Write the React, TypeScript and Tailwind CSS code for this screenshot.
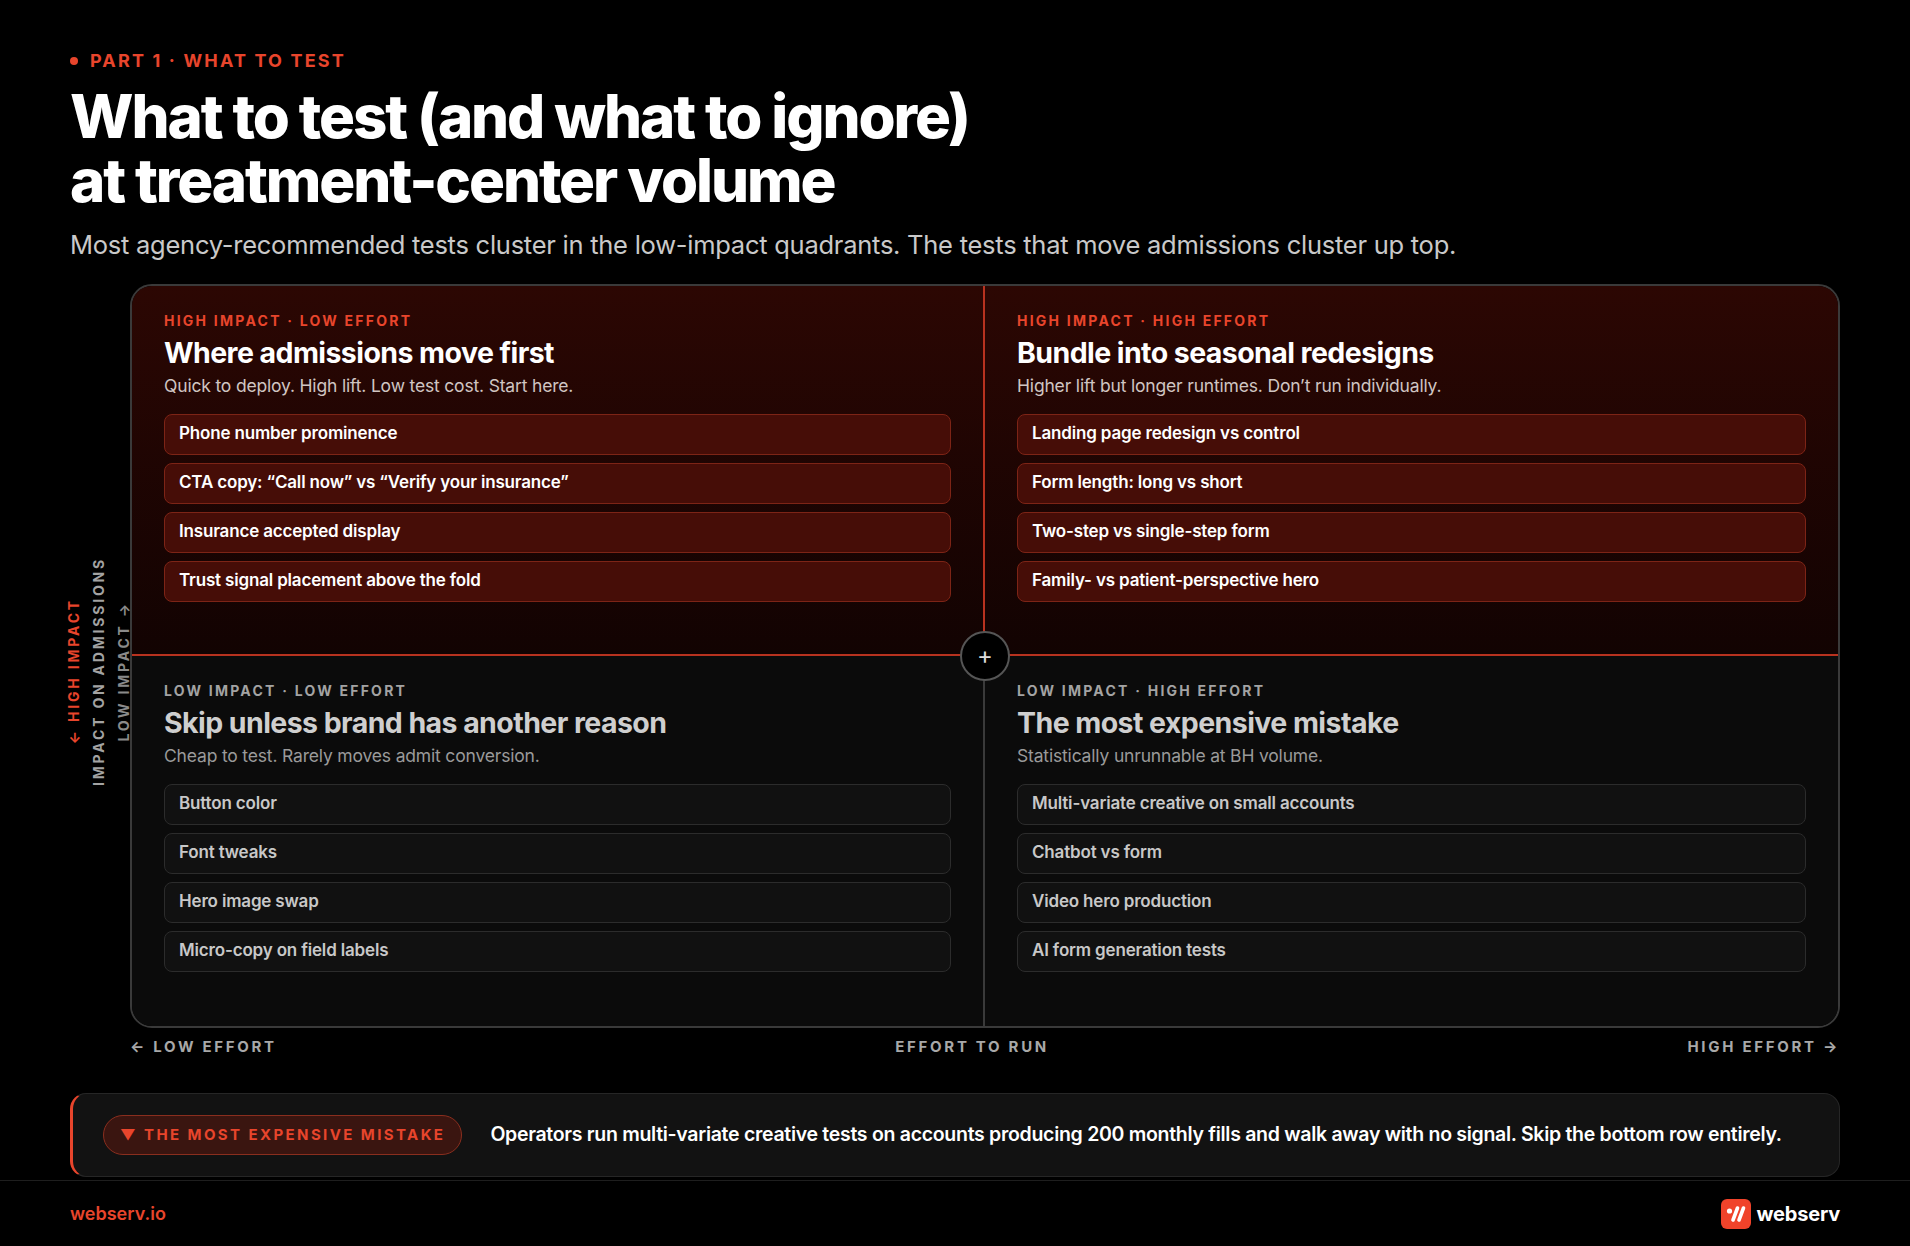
import React from "react";

const F = { fontFamily: "Inter, 'Liberation Sans', sans-serif" };

function Quad({ tag, title, desc, items, hot, cls }: { tag: string; title: string; desc: string; items: string[]; hot: boolean; cls: string }) {
  return (
    <div className={`px-8 pt-[24px] pb-8 ${cls}`}>
      <div className={`text-[14px] font-bold tracking-[0.16em] ${hot ? "text-[#e8452c]" : "text-[#a3a3a3]"}`}>{tag}</div>
      <div className={`mt-[4px] text-[28.5px] font-bold tracking-[-0.02em] leading-[36px] ${hot ? "text-white" : "text-[#cfcfcf]"}`}>{title}</div>
      <div className={`mt-[2px] text-[17.5px] tracking-[-0.01em] ${hot ? "text-[#d0c5c2]" : "text-[#9a9a9a]"}`}>{desc}</div>
      <div className="mt-[14px] flex flex-col gap-[8px]">
        {items.map((t) => (
          <div key={t} className={`h-[41px] flex items-center px-[14px] rounded-[8px] border text-[17px] font-semibold tracking-[-0.01em] ${hot ? "bg-[#460d07] border-[#7d2416] text-white" : "bg-[#111111] border-[#2c2c2c] text-[#c8c8c8]"}`}>{t}</div>
        ))}
      </div>
    </div>
  );
}

export default function App() {
  return (
    <div className="w-[1910px] h-[1246px] bg-black overflow-hidden flex flex-col" style={F}>
      <div className="px-[70px] pt-[47px] flex-1">
        <div className="flex items-center gap-3 text-[#e8452c] text-[18px] font-bold tracking-[0.12em]">
          <span className="w-[8px] h-[8px] rounded-full bg-[#e8452c]" />PART 1 · WHAT TO TEST
        </div>
        <h1 className="mt-[10px] text-white text-[60px] font-extrabold leading-[64px] tracking-[-0.035em]">What to test (and what to ignore)<br />at treatment-center volume</h1>
        <p className="mt-[14px] text-[#c9c9c9] text-[25.5px] tracking-[-0.01em]">Most agency-recommended tests cluster in the low-impact quadrants. The tests that move admissions cluster up top.</p>

        <div className="mt-[20px] flex">
          <div className="w-[60px] flex items-center justify-center gap-[4px] pr-[4px]">
            <div className="[writing-mode:vertical-rl] rotate-180 text-[#e8452c] text-[14px] font-bold tracking-[0.2em]">← HIGH IMPACT</div>
            <div className="[writing-mode:vertical-rl] rotate-180 text-[#a3a3a3] text-[14px] font-bold tracking-[0.2em]">IMPACT ON ADMISSIONS</div>
            <div className="[writing-mode:vertical-rl] rotate-180 text-[#8a8a8a] text-[14px] font-bold tracking-[0.2em]">LOW IMPACT →</div>
          </div>
          <div className="flex-1">
            <div className="relative grid grid-cols-2 rounded-[22px] border-2 border-[#3a3a3a] overflow-hidden">
              <Quad hot tag="HIGH IMPACT · LOW EFFORT" title="Where admissions move first" desc="Quick to deploy. High lift. Low test cost. Start here." items={["Phone number prominence", "CTA copy: “Call now” vs “Verify your insurance”", "Insurance accepted display", "Trust signal placement above the fold"]} cls="bg-gradient-to-b from-[#2c0703] to-[#120302] border-r-2 border-b-2 border-[#b8321f] h-[370px]" />
              <Quad hot tag="HIGH IMPACT · HIGH EFFORT" title="Bundle into seasonal redesigns" desc="Higher lift but longer runtimes. Don’t run individually." items={["Landing page redesign vs control", "Form length: long vs short", "Two-step vs single-step form", "Family- vs patient-perspective hero"]} cls="bg-gradient-to-b from-[#2c0703] to-[#120302] border-b-2 border-[#b8321f] h-[370px]" />
              <Quad hot={false} tag="LOW IMPACT · LOW EFFORT" title="Skip unless brand has another reason" desc="Cheap to test. Rarely moves admit conversion." items={["Button color", "Font tweaks", "Hero image swap", "Micro-copy on field labels"]} cls="bg-[#0b0b0b] border-r-2 border-[#3a3a3a] h-[370px]" />
              <Quad hot={false} tag="LOW IMPACT · HIGH EFFORT" title="The most expensive mistake" desc="Statistically unrunnable at BH volume." items={["Multi-variate creative on small accounts", "Chatbot vs form", "Video hero production", "AI form generation tests"]} cls="bg-[#0b0b0b] h-[370px]" />
              <div className="absolute left-1/2 top-[370px] -translate-x-1/2 -translate-y-1/2 w-[50px] h-[50px] rounded-full bg-black border-2 border-[#555] flex items-center justify-center text-[#ddd] text-[24px] leading-none">+</div>
            </div>
            <div className="mt-[8px] flex justify-between text-[#a8a8a8] text-[15px] font-bold tracking-[0.18em]">
              <span>← LOW EFFORT</span><span className="-ml-[20px]">EFFORT TO RUN</span><span>HIGH EFFORT →</span>
            </div>
          </div>
        </div>

        <div className="mt-[34px] h-[84px] rounded-[16px] bg-[#121212] border border-[#262626] border-l-[3px] border-l-[#e8452c] flex items-center pl-[30px] gap-[28px]">
          <div className="h-[40px] px-[16px] rounded-full bg-[#3a1510] border border-[#8a2e1e] flex items-center text-[#e8452c] text-[15px] font-bold tracking-[0.16em]">▼ THE MOST EXPENSIVE MISTAKE</div>
          <div className="text-white text-[19.5px] font-semibold tracking-[-0.015em]">Operators run multi-variate creative tests on accounts producing 200 monthly fills and walk away with no signal. Skip the bottom row entirely.</div>
        </div>
      </div>
      <div className="h-[66px] border-t border-[#1e1e1e] px-[70px] flex items-center justify-between">
        <span className="text-[#e8452c] text-[18px] font-semibold">webserv.io</span>
        <div className="flex items-center gap-[6px]">
          <svg width="30" height="30" viewBox="0 0 30 30">
            <rect width="30" height="30" rx="6" fill="#f0432a" />
            <circle cx="8.5" cy="12" r="2.6" fill="#fff" />
            <path d="M12 21 L16.5 9 M18 21 L22.5 9" stroke="#fff" strokeWidth="3.6" strokeLinecap="round" />
          </svg>
          <span className="text-white text-[20px] font-bold tracking-[-0.01em]">webserv</span>
        </div>
      </div>
    </div>
  );
}
